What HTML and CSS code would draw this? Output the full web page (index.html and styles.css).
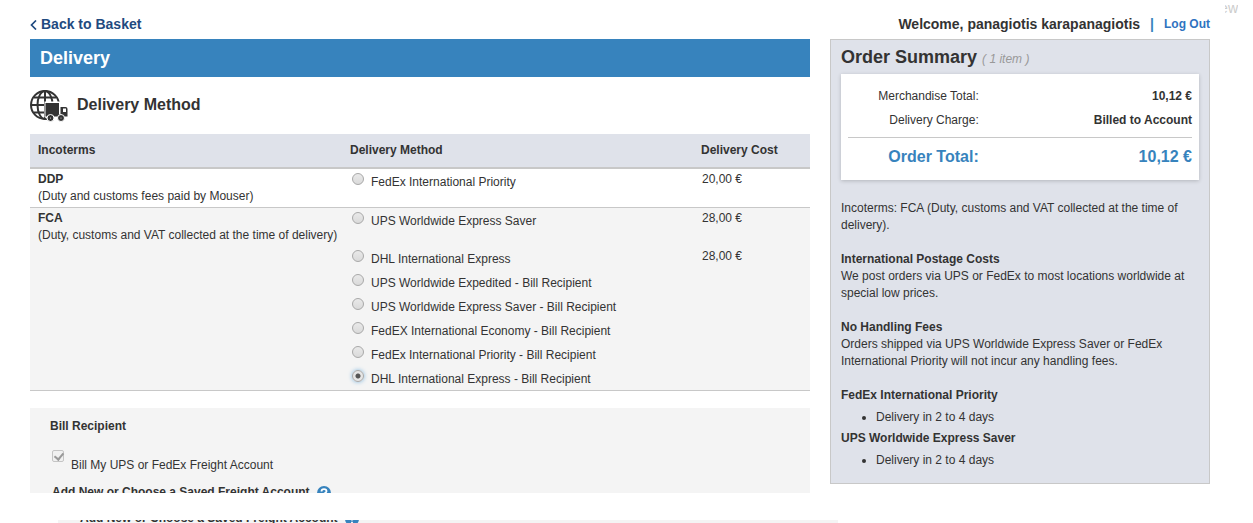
FILE: index.html
```html
<!DOCTYPE html>
<html lang="en">

<head>
    <meta charset="UTF-8">
    <meta name="viewport" content="width=device-width, initial-scale=1.0">
    <title>Delivery</title>
    <link rel="stylesheet" href="styles.css">
</head>

<body>
    <div class="step-tail"><span>ew</span></div>

    <div class="page">
        <main class="main">
            <div class="topbar">
                <a href="#" class="back">
                    <svg width="7" height="10" viewBox="0 0 7 10"><path d="M6 0.5 L1.5 5 L6 9.5" fill="none" stroke="#1f4a80" stroke-width="1.7"/></svg>
                    Back to Basket
                </a>
            </div>
            <h1 class="banner">Delivery</h1>

            <div class="section-title">
                <svg width="38" height="32" viewBox="0 0 38 32">
                    <g fill="none" stroke="#333" stroke-width="2">
                        <circle cx="15" cy="15" r="14"/>
                        <ellipse cx="15" cy="15" rx="7.5" ry="14"/>
                        <path d="M15 1V29M1 15H29M4 7.500H26M4 22.500H16"/>
                    </g>
                    <path d="M14.500 11.500H30V16H38V32H22L14.500 27Z" fill="#fff"/>
                    <path d="M15.500 13H29V26.500H15.500Z" fill="#333"/>
                    <path d="M30.500 17H35.500Q37.500 17 37.500 19V26.500H30.500Z" fill="#333"/>
                    <path d="M33 18.500H36V22H33Z" fill="#fff"/>
                    <path d="M28 24.500H31V26.500H28Z" fill="#333"/>
                    <g fill="#333" stroke="#fff" stroke-width="1">
                        <circle cx="20.500" cy="28" r="3.500"/>
                        <circle cx="31" cy="28" r="3.500"/>
                    </g>
                    <circle cx="20.500" cy="28" r="0.500" fill="#fff"/>
                    <circle cx="31" cy="28" r="0.500" fill="#fff"/>
                </svg>
                <h2>Delivery Method</h2>
            </div>

            <table class="methods">
                <thead>
                    <tr>
                        <th class="col-terms">Incoterms</th>
                        <th class="col-method">Delivery Method</th>
                        <th class="col-cost">Delivery Cost</th>
                    </tr>
                </thead>
                <tbody class="ddp">
                    <tr class="priced">
                        <td class="terms"><strong>DDP</strong><br>(Duty and customs fees paid by Mouser)</td>
                        <td><label class="option"><input type="radio" name="method">FedEx International Priority</label></td>
                        <td class="cost">20,00 €</td>
                    </tr>
                </tbody>
                <tbody class="fca">
                    <tr class="priced">
                        <td class="terms" rowspan="7"><strong>FCA</strong><br>(Duty, customs and VAT collected at the time of delivery)</td>
                        <td><label class="option"><input type="radio" name="method">UPS Worldwide Express Saver</label></td>
                        <td class="cost">28,00 €</td>
                    </tr>
                    <tr>
                        <td><label class="option"><input type="radio" name="method">DHL International Express</label></td>
                        <td class="cost">28,00 €</td>
                    </tr>
                    <tr>
                        <td colspan="2"><label class="option"><input type="radio" name="method">UPS Worldwide Expedited - Bill Recipient</label></td>
                    </tr>
                    <tr>
                        <td colspan="2"><label class="option"><input type="radio" name="method">UPS Worldwide Express Saver - Bill Recipient</label></td>
                    </tr>
                    <tr>
                        <td colspan="2"><label class="option"><input type="radio" name="method">FedEX International Economy - Bill Recipient</label></td>
                    </tr>
                    <tr>
                        <td colspan="2"><label class="option"><input type="radio" name="method">FedEx International Priority - Bill Recipient</label></td>
                    </tr>
                    <tr>
                        <td colspan="2"><label class="option"><input type="radio" name="method" checked>DHL International Express - Bill Recipient</label></td>
                    </tr>
                </tbody>
            </table>

            <section class="recipient">
                <h3>Bill Recipient</h3>
                <label class="bill">
                    <input type="checkbox" checked disabled>
                    <span>Bill My UPS or FedEx Freight Account</span>
                </label>
                <div class="saved">
                    Add New or Choose a Saved Freight Account
                    <svg width="14" height="14" viewBox="0 0 14 14"><circle cx="7" cy="7" r="7" fill="#3783bd"/><path d="M4.500 5.500Q4.500 3.200 7 3.200T9.500 5.300Q9.500 6.400 7 7.800V8.500M7 9.800V11.500" fill="none" stroke="#fff" stroke-width="1.800"/></svg>
                </div>
            </section>
        </main>

        <aside class="side">
            <div class="topbar welcome">
                <strong>Welcome, panagiotis karapanagiotis</strong>
                <span class="divider">|</span>
                <a href="#" class="logout">Log Out</a>
            </div>

            <div class="summary">
                <h2>Order Summary <em>( 1 item )</em></h2>
                <dl class="totals">
                    <div class="line"><dt>Merchandise Total:</dt><dd>10,12 €</dd></div>
                    <div class="line"><dt>Delivery Charge:</dt><dd>Billed to Account</dd></div>
                    <div class="line total"><dt>Order Total:</dt><dd>10,12 €</dd></div>
                </dl>
                <p>Incoterms: FCA (Duty, customs and VAT collected at the time of delivery).</p>
                <h3>International Postage Costs</h3>
                <p>We post orders via UPS or FedEx to most locations worldwide at special low prices.</p>
                <h3>No Handling Fees</h3>
                <p>Orders shipped via UPS Worldwide Express Saver or FedEx International Priority will not incur any handling fees.</p>
                <h3>FedEx International Priority</h3>
                <ul>
                    <li>Delivery in 2 to 4 days</li>
                </ul>
                <h3>UPS Worldwide Express Saver</h3>
                <ul>
                    <li>Delivery in 2 to 4 days</li>
                </ul>
            </div>
        </aside>
    </div>

    <div class="next-strip">
        <div class="next-box">
            <div class="saved">
                Add New or Choose a Saved Freight Account
                <svg width="14" height="14" viewBox="0 0 14 14"><circle cx="7" cy="7" r="7" fill="#3783bd"/><path d="M4.500 5.500Q4.500 3.200 7 3.200T9.500 5.300Q9.500 6.400 7 7.800V8.500M7 9.800V11.500" fill="none" stroke="#fff" stroke-width="1.800"/></svg>
            </div>
        </div>
    </div>
</body>

</html>
```
FILE: styles.css
```css
* {
    box-sizing: border-box;
}

body {
    margin: 0;
    background: #fff;
    color: #333;
    font: 12px/17px "Liberation Sans", Arial, sans-serif;
    overflow: hidden;
}

h1, h2, h3, p, ul, dl, dd {
    margin: 0;
    padding: 0;
}

h3 {
    font-size: 12px;
}

a {
    text-decoration: none;
}

/* end of the step list in the top right corner */
.step-tail {
    position: absolute;
    top: 0;
    right: 15px;
    width: 13px;
    overflow: hidden;
    display: flex;
    justify-content: flex-end;
    color: #ccc;
    font-size: 14px;
}

.page {
    display: grid;
    grid-template-columns: 780fr 380fr;
    gap: 20px;
    padding: 10px 43px 0 30px;
}

.topbar {
    height: 29px;
    line-height: 29px;
    font-size: 14px;
}

.back {
    display: flex;
    align-items: center;
    gap: 4px;
    color: #1f4a80;
    font-weight: bold;
}

.banner {
    height: 38px;
    padding: 0 10px;
    background: #3783bd;
    color: #fff;
    font-size: 18px;
    line-height: 38px;
}

.section-title {
    display: flex;
    align-items: center;
    gap: 9px;
    padding: 13px 0 12px;
}

.section-title h2 {
    font-size: 16px;
    line-height: 20px;
    padding-bottom: 2px;
}

/* delivery methods */
.methods {
    width: 100%;
    table-layout: fixed;
    border-collapse: separate;
    border-spacing: 0;
}

.methods th {
    height: 35px;
    padding: 0 8px;
    background: #dfe2ea;
    border-bottom: 2px solid #c8c8c8;
    text-align: left;
}

.methods .col-terms {
    width: 40%;
}

.methods .col-method {
    width: 45%;
}

.methods .col-cost {
    width: 15%;
}

.methods td {
    height: 24px;
    padding: 0;
    vertical-align: top;
}

.methods .priced td {
    height: 38px;
}

.methods .terms {
    padding: 2px 0 0 8px;
    white-space: nowrap;
}

.methods .cost {
    padding: 2px 0 0 9px;
}

.ddp td,
.fca .terms,
.fca tr:last-child td {
    border-bottom: 1px solid #c8c8c8;
}

.methods .ddp td {
    height: 39px;
}

.fca {
    background: #f4f4f4;
}

.methods .fca tr:last-child td {
    height: 25px;
}

.option {
    display: flex;
    gap: 7px;
    height: 24px;
    padding-left: 10px;
    line-height: 27px;
}

input[type="radio"] {
    appearance: none;
    width: 12px;
    height: 12px;
    margin: 4px 0 0;
    border: 1px solid #a8a8a8;
    border-radius: 50%;
    background: linear-gradient(#e9e9e9, #dadada);
}

input[type="radio"]:checked {
    background: radial-gradient(circle, #555 0, #555 2px, #e6e6e6 3px);
    box-shadow: 0 0 4px #7db5de;
}

/* bill recipient */
.recipient {
    height: 85px;
    margin-top: 17px;
    padding: 10px 20px 0;
    background: #f4f4f4;
    overflow: hidden;
}

.bill {
    display: flex;
    gap: 7px;
    padding: 15px 0 0 2px;
}

.bill span {
    padding-top: 7px;
}

.bill input {
    appearance: none;
    width: 12px;
    height: 12px;
    margin: 0;
    border: 1px solid #c4c4c4;
    border-radius: 2px;
    background: #f0f0f0;
}

.bill input::before {
    content: "";
    display: block;
    width: 4px;
    height: 7px;
    margin: 0 0 0 3px;
    border: solid #999;
    border-width: 0 2px 2px 0;
    transform: rotate(40deg);
}

.saved {
    display: flex;
    align-items: center;
    gap: 7px;
    padding: 10px 2px 0;
    font-weight: bold;
}

/* order summary */
.welcome {
    display: flex;
    justify-content: flex-end;
    gap: 10px;
    white-space: nowrap;
}

.divider {
    color: #3783bd;
    font-weight: bold;
}

.logout {
    color: #2f73c0;
    font-size: 12px;
    font-weight: bold;
}

.summary {
    padding: 7px 10px 14px;
    background: #dfe2ea;
    border: 1px solid #c8c8c8;
}

.summary h2 {
    font-size: 18px;
    line-height: 20px;
}

.summary em {
    color: #999;
    font-size: 12px;
    font-weight: normal;
}

.totals {
    margin: 5px 0 20px;
    padding: 10px 7px 11px;
    background: #fff;
    box-shadow: 0 1px 4px rgba(0, 0, 0, 0.2);
}

.line {
    display: flex;
    line-height: 24px;
}

.line dt {
    width: 38%;
    text-align: right;
}

.line dd {
    flex: 1;
    text-align: right;
    font-weight: bold;
}

.total {
    margin-top: 5px;
    padding-top: 7px;
    border-top: 1px solid #c8c8c8;
    color: #3783bd;
    font-size: 16px;
    font-weight: bold;
}

.summary p {
    margin-bottom: 17px;
}

.summary ul {
    margin: 5px 0 4px;
    padding-left: 35px;
}

.summary ul:last-child {
    margin-bottom: 0;
}

/* top of the following panel */
.next-strip {
    display: grid;
    grid-template-columns: 780fr 380fr;
    gap: 20px;
    margin-top: 27px;
    padding: 0 15px 0 58px;
}

.next-box {
    display: flex;
    align-items: flex-end;
    height: 7px;
    padding-left: 20px;
    background: #f4f4f4;
    overflow: hidden;
}
```
